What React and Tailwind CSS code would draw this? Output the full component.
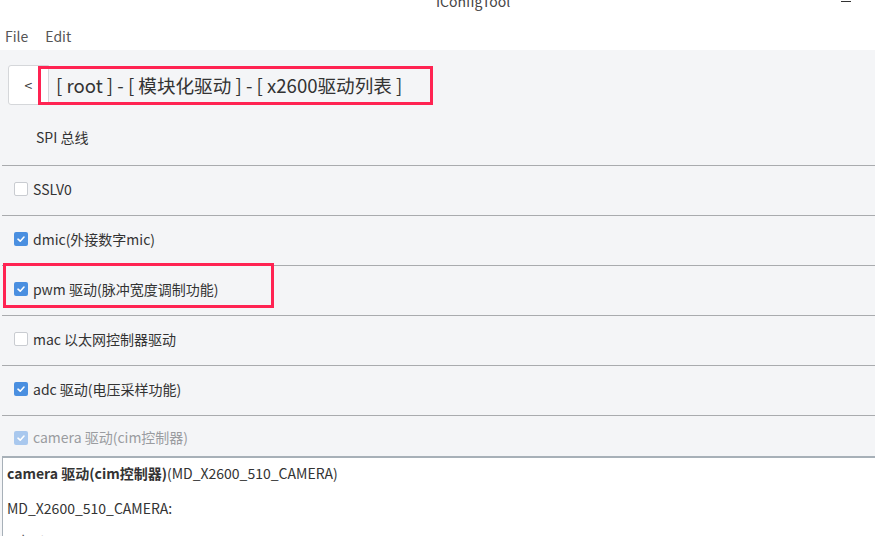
import React from "react";

const rows = [
  { label: "SSLV0", checked: false },
  { label: "dmic(外接数字mic)", checked: true },
  { label: "pwm 驱动(脉冲宽度调制功能)", checked: true, marked: true },
  { label: "mac 以太网控制器驱动", checked: false },
  { label: "adc 驱动(电压采样功能)", checked: true },
  { label: "camera 驱动(cim控制器)", checked: true, disabled: true, last: true },
];

function Check({ checked, disabled }) {
  if (!checked) {
    return <span className="w-[14px] h-[14px] rounded-[2px] border border-[#c9ccd1] bg-white shrink-0" />;
  }
  return (
    <span
      className={
        "w-[14px] h-[14px] rounded-[2px] flex items-center justify-center shrink-0 " +
        (disabled ? "bg-[#a9c8ee]" : "bg-[#4a8fe0]")
      }
    >
      <svg width="10" height="10" viewBox="0 0 10 10">
        <path d="M2 5.2 L4.2 7.2 L8 3" fill="none" stroke="white" strokeWidth="1.6" strokeLinecap="round" strokeLinejoin="round" />
      </svg>
    </span>
  );
}

export default function App() {
  return (
    <div
      className="w-[875px] h-[536px] overflow-hidden bg-white text-[#333] flex flex-col"
      style={{ fontFamily: '"Noto Sans CJK SC", "Noto Sans", sans-serif' }}
    >
      {/* title bar */}
      <div className="h-[22px] relative shrink-0">
        <div className="absolute left-[436px] top-[-9px] text-[14px] text-[#444]">IConfigTool</div>
        <div className="absolute left-[841px] top-[1px] w-[10px] h-[1px] bg-[#333]" />
      </div>

      {/* menu */}
      <div className="h-[28px] flex items-center gap-[17px] pl-[5px] text-[14px] text-[#555] shrink-0">
        <span>File</span>
        <span>Edit</span>
      </div>

      <div className="flex-1 bg-[#f4f5f7] flex flex-col">
        {/* breadcrumb */}
        <div className="pt-[15px] pl-[8px] flex">
          <div className="w-[41px] h-[40px] bg-white border border-[#d5d7da] rounded-l-[3px] flex items-center justify-center text-[14px] text-[#333]">
            &lt;
          </div>
          <div className="relative h-[40px] flex items-center pl-[7px] text-[18.6px] text-[#333]">
            [ root ] - [ 模块化驱动 ] - [ x2600驱动列表 ]
            <div className="absolute left-[-11px] top-[1px] w-[395px] h-[39px] border-[3px] border-[#ff2352]" />
          </div>
        </div>

        <div className="h-[60px] flex items-center pl-[36px] text-[14px] pt-[4px]">SPI 总线</div>

        <div className="flex flex-col">
          {rows.map((r) => (
            <div key={r.label} className="relative">
              <div className="ml-[2px] h-[1px] bg-[#a9abae]" />
              <div
                className={
                  "flex items-center gap-[5px] pl-[14px] text-[14px] " +
                  (r.last ? "h-[40px] pt-[3px] " : "h-[49px] pb-[3px] ") +
                  (r.disabled ? "text-[#9a9ca0]" : "text-[#333]")
                }
              >
                <Check checked={r.checked} disabled={r.disabled} />
                <span>{r.label}</span>
              </div>
              {r.marked && (
                <div className="absolute left-[3px] top-[-2px] w-[271px] h-[45px] border-[3px] border-[#ff2352]" />
              )}
            </div>
          ))}
        </div>

        {/* description */}
        <div className="flex-1 ml-[2px] border-t-[2px] border-l border-[#a7b0b8] bg-white px-[4px] pt-[1px] text-[14px] text-[#333]">
          <div className="h-[28px] flex items-center">
            <span className="font-bold">camera 驱动(cim控制器)</span>
            <span>(MD_X2600_510_CAMERA)</span>
          </div>
          <div className="h-[34px] flex items-center mt-[4px]">MD_X2600_510_CAMERA:</div>
          <div className="h-[30px] flex items-center text-[#555]">select camera</div>
        </div>
      </div>
    </div>
  );
}
